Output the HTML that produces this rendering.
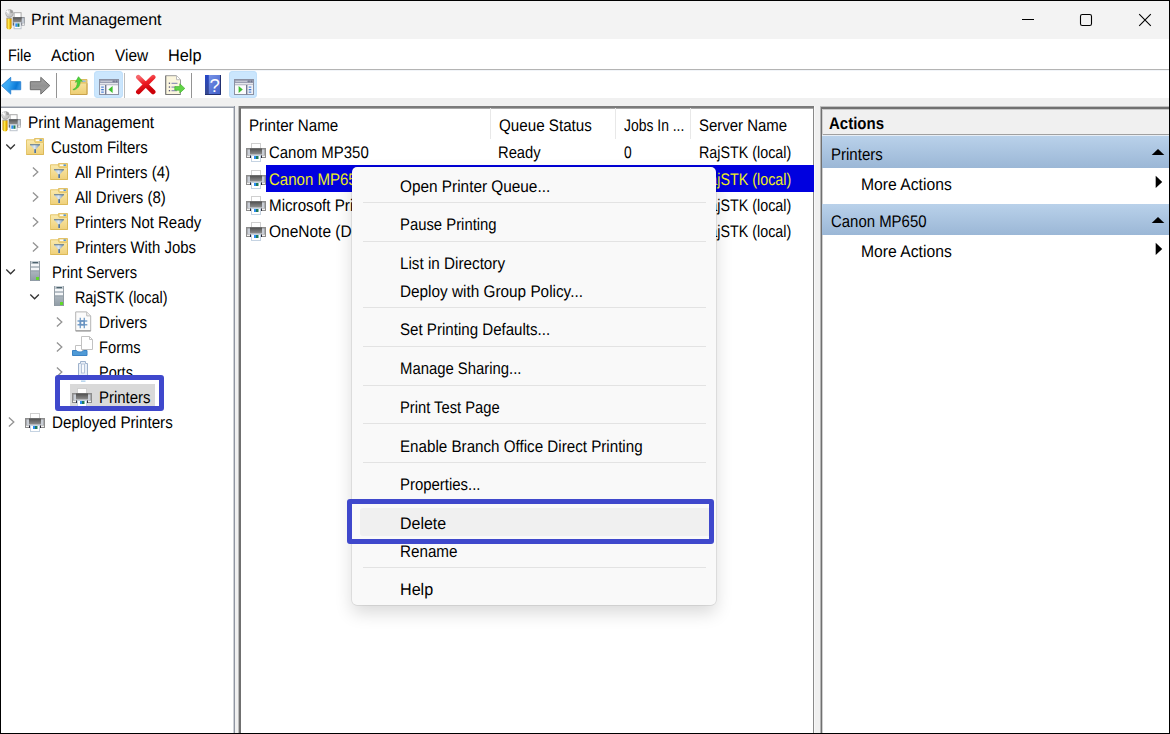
<!DOCTYPE html>
<html><head><meta charset="utf-8"><title>Print Management</title>
<style>
html,body{margin:0;padding:0;}
body{width:1170px;height:734px;overflow:hidden;background:#f0f0f0;font-family:"Liberation Sans",sans-serif;font-size:15px;color:#000;position:relative;}
.abs{position:absolute;}
.t{position:absolute;white-space:nowrap;line-height:20px;height:20px;font-size:16.8px;transform-origin:0 50%;text-rendering:geometricPrecision;}
.y{color:#eded22;}
#frame{position:absolute;left:0;top:0;width:1168px;height:732px;border:1px solid #000;z-index:50;}
#title{position:absolute;left:0;top:0;width:1170px;height:39px;background:#f3f3f3;}
#menu{position:absolute;left:0;top:39px;width:1170px;height:30px;background:#fff;border-bottom:1px solid #b4b4b4;}
#tool{position:absolute;left:0;top:70px;width:1170px;height:28.300px;background:#fff;border-top:1px solid #f1f4f8;box-sizing:border-box;}
#left{position:absolute;left:0;top:106px;width:233px;height:628px;background:#fff;}
#mid{position:absolute;left:238px;top:106px;width:575px;height:628px;background:#fff;}
#right{position:absolute;left:820px;top:106px;width:350px;height:628px;background:#fff;}
.band{position:absolute;left:822px;width:348px;height:31px;background:linear-gradient(#b9d1ea,#9bb7d6);}
.sep{position:absolute;left:363px;width:343px;height:1px;background:#e3e3e3;}
.hsep{position:absolute;top:108px;width:1px;height:31px;background:#e8e8e8;}
#ctx{position:absolute;left:352.200px;top:166.900px;width:364.200px;height:437.800px;background:#f9f9f9;border-radius:5px;box-shadow:0 0 0 0.700px rgba(0,0,0,0.100),0 8px 17px rgba(0,0,0,0.150);}
.bluebox{position:absolute;border:5px solid #3f48cc;border-radius:3px;box-sizing:border-box;}
</style></head><body>
<div id="title"></div>
<svg class="abs" style="left:4.6px;top:8.7px" width="21" height="21" viewBox="0 0 21 21">
<defs><linearGradient id="pma" x1="0" y1="0" x2="0" y2="1"><stop offset="0" stop-color="#555"/><stop offset="1" stop-color="#8c8c8c"/></linearGradient>
<linearGradient id="pya" x1="0" y1="0" x2="1" y2="0"><stop offset="0" stop-color="#c98d00"/><stop offset="0.420" stop-color="#ffec50"/><stop offset="0.700" stop-color="#eab400"/><stop offset="1" stop-color="#c88a00"/></linearGradient>
<linearGradient id="pwa" x1="0" y1="0" x2="1" y2="1"><stop offset="0" stop-color="#efefef"/><stop offset="1" stop-color="#b4b4b4"/></linearGradient></defs>
<rect x="9.100" y="3.700" width="7" height="5" fill="#fff" stroke="#a9a9a9"/>
<rect x="7.600" y="8" width="12.200" height="8.500" fill="#8f949b"/>
<rect x="8" y="8.300" width="9" height="4.700" fill="url(#pma)"/>
<rect x="16.700" y="9.200" width="2.200" height="5" fill="#c7ced8"/>
<rect x="8" y="13" width="9" height="1" fill="#dfe4ea"/>
<rect x="17" y="14.300" width="2.300" height="1.700" fill="#f0f0f0"/>
<rect x="8" y="13.500" width="1.100" height="3" fill="#2b2b3a"/><rect x="16" y="13.500" width="1.100" height="3" fill="#2b2b3a"/>
<rect x="9.100" y="13.700" width="7" height="6" fill="#fff" stroke="#bcc3cc"/>
<rect x="10.300" y="14.400" width="2.200" height="3.400" fill="#2a8cf0"/>
<rect x="12.500" y="14.400" width="2" height="3.400" fill="#1f7a5a"/>
<circle cx="4.500" cy="4.400" r="3.800" fill="url(#pwa)" stroke="#a2a2a2" stroke-width="0.700"/>
<path d="M5 0.600a3.800 3.800 0 0 1 3.200 3l-2.700 1z" fill="#9b9b9b"/>
<path d="M0.900 2.600l3.300 2.300-1.300-4z" fill="#fff"/>
<path d="M1.500 9.200h5.100v9.100a2.550 2.200 0 0 1-5.100 0z" fill="url(#pya)"/>
<rect x="1.500" y="8.600" width="5.100" height="0.900" fill="#8a8a8a"/>
</svg>
<span class="t" style="left:31.03px;top:10px;transform:scaleX(0.9740);font-size:16.4px;">Print Management</span>
<svg class="abs" style="left:1016px;top:8px" width="24" height="24" viewBox="0 0 24 24"><path d="M6 11.500H18" stroke="#000" stroke-width="1" fill="none"/></svg>
<svg class="abs" style="left:1074px;top:8px" width="24" height="24" viewBox="0 0 24 24"><rect x="6.500" y="6.500" width="11" height="11" rx="1.800" stroke="#000" stroke-width="1.100" fill="none"/></svg>
<svg class="abs" style="left:1133px;top:8px" width="24" height="24" viewBox="0 0 24 24"><path d="M6.200 6.200L17.800 17.800M17.800 6.200L6.200 17.800" stroke="#000" stroke-width="1.100" fill="none"/></svg>
<div id="menu"></div>
<span class="t" style="left:7.94px;top:46px;transform:scaleX(0.8636);">File</span>
<span class="t" style="left:51.40px;top:46px;transform:scaleX(0.9372);">Action</span>
<span class="t" style="left:115.30px;top:46px;transform:scaleX(0.9174);">View</span>
<span class="t" style="left:168.23px;top:46px;transform:scaleX(0.9705);">Help</span>
<div id="tool"></div>
<svg class="abs" style="left:1px;top:76px" width="21" height="19" viewBox="0 0 21 19">
<defs><linearGradient id="ba" x1="0" y1="0" x2="1" y2="0.300"><stop offset="0" stop-color="#4db5f8"/><stop offset="0.450" stop-color="#36a6f3"/><stop offset="0.850" stop-color="#0a78d6"/><stop offset="1" stop-color="#2b90e4"/></linearGradient></defs>
<path d="M9.700 1.300v4.400h10v8h-10v4.400l-9-8.500z" fill="url(#ba)" stroke="#2f86d4" stroke-width="1" stroke-linejoin="round"/></svg>
<svg class="abs" style="left:29px;top:76px" width="22" height="19" viewBox="0 0 22 19">
<defs><linearGradient id="fa" x1="0" y1="0" x2="0" y2="1"><stop offset="0" stop-color="#a9a9a9"/><stop offset="0.500" stop-color="#929292"/><stop offset="1" stop-color="#a3a3a3"/></linearGradient></defs>
<path d="M11.800 1.300v4.400h-10.500v8h10.500v4.400l9-8.500z" fill="url(#fa)" stroke="#6d6d6d" stroke-width="1" stroke-linejoin="round"/></svg>
<div class="abs" style="left:56px;top:73px;width:1px;height:25px;background:#949494"></div>
<svg class="abs" style="left:69px;top:75px" width="19" height="21" viewBox="0 0 19 21">
<defs><linearGradient id="fu" x1="0" y1="0" x2="0" y2="1"><stop offset="0" stop-color="#f8e6a6"/><stop offset="1" stop-color="#edcd72"/></linearGradient></defs>
<path d="M10 4.500h8v4h-8z" fill="#ecd07a" stroke="#dcbc62"/>
<rect x="13" y="5.500" width="3.500" height="1.400" fill="#8fb8ea"/>
<path d="M1.500 5.500h8l1 2.500h7.500v11.500h-16.500z" fill="url(#fu)" stroke="#dcbb60"/>
<path d="M1.500 19.500h16.500v-11" fill="none" stroke="#c9a24c"/>
<path d="M4 14.500c3-1 4.500-3.500 4.300-8l-2 0.800 3.200-5.600 3.800 4.600-2.200-0.200c0.300 5-2.600 7.900-6.600 8.900z" fill="#4fd13a" stroke="#35b525" stroke-width="0.600"/>
</svg>
<div class="abs" style="left:93.500px;top:71px;width:29px;height:27.400px;background:#cbe6fd;border-radius:4px;box-shadow:inset 0 0 0 1px #c2e0fa"></div>
<svg class="abs" style="left:99px;top:79px" width="20" height="16" viewBox="0 0 20 16"><rect x="0.500" y="0.500" width="19" height="15" fill="#fbfbfc" stroke="#8b90a2"/>
<rect x="1" y="1" width="18" height="3.200" fill="#9a9eb2"/>
<rect x="1.500" y="1.800" width="11.500" height="1.200" fill="#c3c6d2"/>
<rect x="14.200" y="1.500" width="1.400" height="1.800" fill="#6f748a"/><rect x="16.800" y="1.500" width="1.400" height="1.800" fill="#6f748a"/>
<rect x="1" y="4.200" width="18" height="1.200" fill="#e4e6ec"/>
<rect x="1" y="5.400" width="18" height="0.800" fill="#9da1b3"/><rect x="1" y="6.200" width="5" height="8.800" fill="#eef0f5"/>
<rect x="6" y="6" width="1.400" height="9.500" fill="#73798f"/>
<rect x="2.200" y="7.500" width="2.600" height="1.300" fill="#5f90dc"/><rect x="2.200" y="10" width="2.600" height="1.300" fill="#3f78d2"/><rect x="2.200" y="12.500" width="2.600" height="1.300" fill="#5f90dc"/>
<path d="M13.600 7v7l-4.200-3.500z" fill="#3fbf2f"/></svg>
<div class="abs" style="left:123.600px;top:73px;width:1.400px;height:25px;background:#bdbdbd"></div>
<svg class="abs" style="left:135px;top:74px" width="22" height="21" viewBox="0 0 22 21">
<defs><linearGradient id="rx" x1="0" y1="0" x2="0.300" y2="1"><stop offset="0" stop-color="#f5686d"/><stop offset="0.450" stop-color="#ee1c24"/><stop offset="1" stop-color="#cc0008"/></linearGradient></defs>
<path d="M3.300 3.200L18.200 18M18.200 3.200L3.300 18" stroke="url(#rx)" stroke-width="4.600" stroke-linecap="round" fill="none"/></svg>
<svg class="abs" style="left:165px;top:75px" width="21" height="20" viewBox="0 0 21 20">
<path d="M0.700 0.700h10.800l4 4v14.800h-14.800z" fill="#fbf6de" stroke="#9a9a9a"/>
<path d="M0.700 0.700v18.800h14.800" fill="none" stroke="#787878"/>
<path d="M11.500 0.700v4h4" fill="#fff" stroke="#bdbdbd"/>
<g fill="#55557a"><rect x="3.800" y="7.600" width="1.300" height="1.300"/><rect x="3.800" y="11.400" width="1.300" height="1.300"/><rect x="3.800" y="15" width="1.300" height="1.300"/></g>
<g fill="#7d7db0"><rect x="6.500" y="7.800" width="6" height="1"/><rect x="6.500" y="11.600" width="4" height="1"/><rect x="6.500" y="15.200" width="5.500" height="1"/></g>
<path d="M9.800 11.600h5v-2.800l5 4.600-5 4.600v-2.800h-5z" fill="#62d447" stroke="#43b52e" stroke-width="0.700" stroke-linejoin="round"/>
</svg>
<div class="abs" style="left:191px;top:73px;width:1px;height:25px;background:#949494"></div>
<svg class="abs" style="left:205px;top:75px" width="16" height="20" viewBox="0 0 16 20">
<defs><linearGradient id="hp" x1="0" y1="0" x2="1" y2="1"><stop offset="0" stop-color="#7e9aec"/><stop offset="1" stop-color="#3f5cc6"/></linearGradient>
<linearGradient id="hq" x1="0" y1="0" x2="0" y2="1"><stop offset="0" stop-color="#2647c8"/><stop offset="1" stop-color="#38488c"/></linearGradient></defs>
<rect x="0" y="0" width="16" height="20" fill="url(#hp)"/><rect x="0" y="0" width="3.800" height="20" fill="url(#hq)"/>
<path d="M0 19.500h15.500v-19.500" fill="none" stroke="#223070" stroke-width="1"/>
<text x="9.700" y="16.600" font-family="Liberation Sans, sans-serif" font-size="18.500" fill="#fff" text-anchor="middle">?</text>
</svg>
<div class="abs" style="left:228.800px;top:71px;width:28.700px;height:27.400px;background:#cbe6fd;border-radius:4px;box-shadow:inset 0 0 0 1px #c2e0fa"></div>
<svg class="abs" style="left:234px;top:79px" width="20" height="16" viewBox="0 0 20 16"><rect x="0.500" y="0.500" width="19" height="15" fill="#fbfbfc" stroke="#8b90a2"/>
<rect x="1" y="1" width="18" height="3.200" fill="#9a9eb2"/>
<rect x="1.500" y="1.800" width="11.500" height="1.200" fill="#c3c6d2"/>
<rect x="14.200" y="1.500" width="1.400" height="1.800" fill="#6f748a"/><rect x="16.800" y="1.500" width="1.400" height="1.800" fill="#6f748a"/>
<rect x="1" y="4.200" width="18" height="1.200" fill="#e4e6ec"/>
<rect x="1" y="5.400" width="18" height="0.800" fill="#9da1b3"/><rect x="13.500" y="6.200" width="5.500" height="8.800" fill="#eef0f5"/>
<rect x="12" y="6" width="1.400" height="9.500" fill="#73798f"/>
<rect x="14.700" y="7.500" width="2.600" height="1.300" fill="#5f90dc"/><rect x="14.700" y="10" width="2.600" height="1.300" fill="#3f78d2"/><rect x="14.700" y="12.500" width="2.600" height="1.300" fill="#5f90dc"/>
<path d="M4.600 7v7l4.200-3.500z" fill="#3fbf2f"/></svg>
<div id="left"></div>
<div class="abs" style="left:0px;top:106px;width:235px;height:1px;background:#c3c7cd"></div>
<div class="abs" style="left:0px;top:107px;width:235px;height:1px;background:#9399a4"></div>
<div class="abs" style="left:233px;top:108px;width:1px;height:626px;background:#cfd2d7"></div>
<div class="abs" style="left:234px;top:106px;width:1px;height:628px;background:#8f95a1"></div>
<svg class="abs" style="left:1px;top:111px" width="21" height="21" viewBox="0 0 21 21">
<defs><linearGradient id="pmb" x1="0" y1="0" x2="0" y2="1"><stop offset="0" stop-color="#555"/><stop offset="1" stop-color="#8c8c8c"/></linearGradient>
<linearGradient id="pyb" x1="0" y1="0" x2="1" y2="0"><stop offset="0" stop-color="#c98d00"/><stop offset="0.420" stop-color="#ffec50"/><stop offset="0.700" stop-color="#eab400"/><stop offset="1" stop-color="#c88a00"/></linearGradient>
<linearGradient id="pwb" x1="0" y1="0" x2="1" y2="1"><stop offset="0" stop-color="#efefef"/><stop offset="1" stop-color="#b4b4b4"/></linearGradient></defs>
<rect x="9.100" y="3.700" width="7" height="5" fill="#fff" stroke="#a9a9a9"/>
<rect x="7.600" y="8" width="12.200" height="8.500" fill="#8f949b"/>
<rect x="8" y="8.300" width="9" height="4.700" fill="url(#pmb)"/>
<rect x="16.700" y="9.200" width="2.200" height="5" fill="#c7ced8"/>
<rect x="8" y="13" width="9" height="1" fill="#dfe4ea"/>
<rect x="17" y="14.300" width="2.300" height="1.700" fill="#f0f0f0"/>
<rect x="8" y="13.500" width="1.100" height="3" fill="#2b2b3a"/><rect x="16" y="13.500" width="1.100" height="3" fill="#2b2b3a"/>
<rect x="9.100" y="13.700" width="7" height="6" fill="#fff" stroke="#bcc3cc"/>
<rect x="10.300" y="14.400" width="2.200" height="3.400" fill="#2a8cf0"/>
<rect x="12.500" y="14.400" width="2" height="3.400" fill="#1f7a5a"/>
<circle cx="4.500" cy="4.400" r="3.800" fill="url(#pwb)" stroke="#a2a2a2" stroke-width="0.700"/>
<path d="M5 0.600a3.800 3.800 0 0 1 3.200 3l-2.700 1z" fill="#9b9b9b"/>
<path d="M0.900 2.600l3.300 2.300-1.300-4z" fill="#fff"/>
<path d="M1.500 9.200h5.100v9.100a2.550 2.200 0 0 1-5.100 0z" fill="url(#pyb)"/>
<rect x="1.500" y="8.600" width="5.100" height="0.900" fill="#8a8a8a"/>
</svg>
<span class="t" style="left:27.68px;top:113px;transform:scaleX(0.9190);">Print Management</span>
<svg class="abs" style="left:5px;top:143.2px" width="12" height="8" viewBox="0 0 12 8"><path d="M1.300 1.500l4.300 4.300 4.300-4.300" stroke="#333" stroke-width="1.300" fill="none"/></svg>
<svg class="abs" style="left:26px;top:137.5px" width="18" height="17" viewBox="0 0 18 17">
<defs><linearGradient id="ffc1" x1="0" y1="0" x2="0" y2="1"><stop offset="0" stop-color="#f9e9ad"/><stop offset="1" stop-color="#efd07a"/></linearGradient>
<linearGradient id="fnc1" x1="0" y1="0" x2="1" y2="0"><stop offset="0" stop-color="#a9c0d6"/><stop offset="0.450" stop-color="#dbe6f0"/><stop offset="1" stop-color="#6f8dab"/></linearGradient></defs>
<path d="M8.500 0.500h9v5h-9z" fill="#edd281" stroke="#e3c266" stroke-width="1"/>
<path d="M0.500 1.800h7.600l1 2.600h8.400v12.100h-17z" fill="url(#ffc1)" stroke="#e5c76c" stroke-width="1"/>
<path d="M0.500 16.500h17v-11" fill="none" stroke="#dcb958" stroke-width="1"/>
<rect x="9.800" y="1.500" width="3.800" height="1.400" fill="#fff"/>
<rect x="13.600" y="1.500" width="2.200" height="1.400" fill="#3a8ee6"/>
<path d="M4 6.700h10l-4 4.600v4.200l-1.800-0.800v-3.400z" fill="url(#fnc1)"/>
<rect x="4" y="6.300" width="10" height="0.900" fill="#4f6d8c"/>
<rect x="8.300" y="11.200" width="1.700" height="3.800" fill="#54759a"/>
</svg>
<span class="t" style="left:51.10px;top:138px;transform:scaleX(0.8954);">Custom Filters</span>
<svg class="abs" style="left:32px;top:166px" width="8" height="12" viewBox="0 0 8 12"><path d="M0.900 1.600l4.900 4.400-4.900 4.400" stroke="#939393" stroke-width="1.300" fill="none"/></svg>
<svg class="abs" style="left:50px;top:163px" width="18" height="17" viewBox="0 0 18 17">
<defs><linearGradient id="ffd0" x1="0" y1="0" x2="0" y2="1"><stop offset="0" stop-color="#f9e9ad"/><stop offset="1" stop-color="#efd07a"/></linearGradient>
<linearGradient id="fnd0" x1="0" y1="0" x2="1" y2="0"><stop offset="0" stop-color="#a9c0d6"/><stop offset="0.450" stop-color="#dbe6f0"/><stop offset="1" stop-color="#6f8dab"/></linearGradient></defs>
<path d="M8.500 0.500h9v5h-9z" fill="#edd281" stroke="#e3c266" stroke-width="1"/>
<path d="M0.500 1.800h7.600l1 2.600h8.400v12.100h-17z" fill="url(#ffd0)" stroke="#e5c76c" stroke-width="1"/>
<path d="M0.500 16.500h17v-11" fill="none" stroke="#dcb958" stroke-width="1"/>
<rect x="9.800" y="1.500" width="3.800" height="1.400" fill="#fff"/>
<rect x="13.600" y="1.500" width="2.200" height="1.400" fill="#3a8ee6"/>
<path d="M4 6.700h10l-4 4.600v4.200l-1.800-0.800v-3.400z" fill="url(#fnd0)"/>
<rect x="4" y="6.300" width="10" height="0.900" fill="#4f6d8c"/>
<rect x="8.300" y="11.200" width="1.700" height="3.800" fill="#54759a"/>
</svg>
<span class="t" style="left:75.10px;top:163px;transform:scaleX(0.8939);">All Printers (4)</span>
<svg class="abs" style="left:32px;top:191px" width="8" height="12" viewBox="0 0 8 12"><path d="M0.900 1.600l4.900 4.400-4.900 4.400" stroke="#939393" stroke-width="1.300" fill="none"/></svg>
<svg class="abs" style="left:50px;top:188px" width="18" height="17" viewBox="0 0 18 17">
<defs><linearGradient id="ffd1" x1="0" y1="0" x2="0" y2="1"><stop offset="0" stop-color="#f9e9ad"/><stop offset="1" stop-color="#efd07a"/></linearGradient>
<linearGradient id="fnd1" x1="0" y1="0" x2="1" y2="0"><stop offset="0" stop-color="#a9c0d6"/><stop offset="0.450" stop-color="#dbe6f0"/><stop offset="1" stop-color="#6f8dab"/></linearGradient></defs>
<path d="M8.500 0.500h9v5h-9z" fill="#edd281" stroke="#e3c266" stroke-width="1"/>
<path d="M0.500 1.800h7.600l1 2.600h8.400v12.100h-17z" fill="url(#ffd1)" stroke="#e5c76c" stroke-width="1"/>
<path d="M0.500 16.500h17v-11" fill="none" stroke="#dcb958" stroke-width="1"/>
<rect x="9.800" y="1.500" width="3.800" height="1.400" fill="#fff"/>
<rect x="13.600" y="1.500" width="2.200" height="1.400" fill="#3a8ee6"/>
<path d="M4 6.700h10l-4 4.600v4.200l-1.800-0.800v-3.400z" fill="url(#fnd1)"/>
<rect x="4" y="6.300" width="10" height="0.900" fill="#4f6d8c"/>
<rect x="8.300" y="11.200" width="1.700" height="3.800" fill="#54759a"/>
</svg>
<span class="t" style="left:75.10px;top:188px;transform:scaleX(0.8938);">All Drivers (8)</span>
<svg class="abs" style="left:32px;top:216px" width="8" height="12" viewBox="0 0 8 12"><path d="M0.900 1.600l4.900 4.400-4.900 4.400" stroke="#939393" stroke-width="1.300" fill="none"/></svg>
<svg class="abs" style="left:50px;top:213px" width="18" height="17" viewBox="0 0 18 17">
<defs><linearGradient id="ffd2" x1="0" y1="0" x2="0" y2="1"><stop offset="0" stop-color="#f9e9ad"/><stop offset="1" stop-color="#efd07a"/></linearGradient>
<linearGradient id="fnd2" x1="0" y1="0" x2="1" y2="0"><stop offset="0" stop-color="#a9c0d6"/><stop offset="0.450" stop-color="#dbe6f0"/><stop offset="1" stop-color="#6f8dab"/></linearGradient></defs>
<path d="M8.500 0.500h9v5h-9z" fill="#edd281" stroke="#e3c266" stroke-width="1"/>
<path d="M0.500 1.800h7.600l1 2.600h8.400v12.100h-17z" fill="url(#ffd2)" stroke="#e5c76c" stroke-width="1"/>
<path d="M0.500 16.500h17v-11" fill="none" stroke="#dcb958" stroke-width="1"/>
<rect x="9.800" y="1.500" width="3.800" height="1.400" fill="#fff"/>
<rect x="13.600" y="1.500" width="2.200" height="1.400" fill="#3a8ee6"/>
<path d="M4 6.700h10l-4 4.600v4.200l-1.800-0.800v-3.400z" fill="url(#fnd2)"/>
<rect x="4" y="6.300" width="10" height="0.900" fill="#4f6d8c"/>
<rect x="8.300" y="11.200" width="1.700" height="3.800" fill="#54759a"/>
</svg>
<span class="t" style="left:74.71px;top:213px;transform:scaleX(0.8906);">Printers Not Ready</span>
<svg class="abs" style="left:32px;top:241px" width="8" height="12" viewBox="0 0 8 12"><path d="M0.900 1.600l4.900 4.400-4.900 4.400" stroke="#939393" stroke-width="1.300" fill="none"/></svg>
<svg class="abs" style="left:50px;top:238px" width="18" height="17" viewBox="0 0 18 17">
<defs><linearGradient id="ffd3" x1="0" y1="0" x2="0" y2="1"><stop offset="0" stop-color="#f9e9ad"/><stop offset="1" stop-color="#efd07a"/></linearGradient>
<linearGradient id="fnd3" x1="0" y1="0" x2="1" y2="0"><stop offset="0" stop-color="#a9c0d6"/><stop offset="0.450" stop-color="#dbe6f0"/><stop offset="1" stop-color="#6f8dab"/></linearGradient></defs>
<path d="M8.500 0.500h9v5h-9z" fill="#edd281" stroke="#e3c266" stroke-width="1"/>
<path d="M0.500 1.800h7.600l1 2.600h8.400v12.100h-17z" fill="url(#ffd3)" stroke="#e5c76c" stroke-width="1"/>
<path d="M0.500 16.500h17v-11" fill="none" stroke="#dcb958" stroke-width="1"/>
<rect x="9.800" y="1.500" width="3.800" height="1.400" fill="#fff"/>
<rect x="13.600" y="1.500" width="2.200" height="1.400" fill="#3a8ee6"/>
<path d="M4 6.700h10l-4 4.600v4.200l-1.800-0.800v-3.400z" fill="url(#fnd3)"/>
<rect x="4" y="6.300" width="10" height="0.900" fill="#4f6d8c"/>
<rect x="8.300" y="11.200" width="1.700" height="3.800" fill="#54759a"/>
</svg>
<span class="t" style="left:74.71px;top:238px;transform:scaleX(0.8882);">Printers With Jobs</span>
<svg class="abs" style="left:5px;top:268.2px" width="12" height="8" viewBox="0 0 12 8"><path d="M1.300 1.500l4.300 4.300 4.300-4.300" stroke="#333" stroke-width="1.300" fill="none"/></svg>
<svg class="abs" style="left:30px;top:261px" width="10" height="20" viewBox="0 0 10 20">
<defs><linearGradient id="svs1" x1="0" y1="0" x2="0" y2="1"><stop offset="0" stop-color="#c9d0d6"/><stop offset="1" stop-color="#8f9ba5"/></linearGradient></defs>
<rect x="0" y="0" width="10" height="20" fill="url(#svs1)"/>
<rect x="0" y="0" width="0.8" height="20" fill="#8d969e"/><rect x="9.2" y="0" width="0.8" height="20" fill="#8d969e"/>
<rect x="2.5" y="1.2" width="5.5" height="1" fill="#2d4a55"/>
<rect x="1" y="3" width="8" height="2" fill="#f4f6f8"/>
<rect x="1" y="7" width="8" height="2" fill="#f4f6f8"/>
<rect x="1" y="10" width="8" height="0.7" fill="#9aa5ae"/>
<rect x="6" y="16" width="3" height="3" fill="#5fd829"/>
</svg>
<span class="t" style="left:51.52px;top:263px;transform:scaleX(0.8766);">Print Servers</span>
<svg class="abs" style="left:29px;top:293.2px" width="12" height="8" viewBox="0 0 12 8"><path d="M1.300 1.500l4.300 4.300 4.300-4.300" stroke="#333" stroke-width="1.300" fill="none"/></svg>
<svg class="abs" style="left:54px;top:286px" width="10" height="20" viewBox="0 0 10 20">
<defs><linearGradient id="svs2" x1="0" y1="0" x2="0" y2="1"><stop offset="0" stop-color="#c9d0d6"/><stop offset="1" stop-color="#8f9ba5"/></linearGradient></defs>
<rect x="0" y="0" width="10" height="20" fill="url(#svs2)"/>
<rect x="0" y="0" width="0.8" height="20" fill="#8d969e"/><rect x="9.2" y="0" width="0.8" height="20" fill="#8d969e"/>
<rect x="2.5" y="1.2" width="5.5" height="1" fill="#2d4a55"/>
<rect x="1" y="3" width="8" height="2" fill="#f4f6f8"/>
<rect x="1" y="7" width="8" height="2" fill="#f4f6f8"/>
<rect x="1" y="10" width="8" height="0.7" fill="#9aa5ae"/>
<rect x="6" y="16" width="3" height="3" fill="#5fd829"/>
</svg>
<span class="t" style="left:74.75px;top:288px;transform:scaleX(0.8548);">RajSTK (local)</span>
<svg class="abs" style="left:56px;top:316px" width="8" height="12" viewBox="0 0 8 12"><path d="M0.900 1.600l4.900 4.400-4.900 4.400" stroke="#939393" stroke-width="1.300" fill="none"/></svg>
<svg class="abs" style="left:75px;top:311px" width="17" height="21" viewBox="0 0 17 21">
<path d="M0.700 0.900h11l4 4v15h-15z" fill="#fbfbfb" stroke="#b4b4b4"/>
<path d="M0.700 19.900h15" fill="none" stroke="#8e8e8e"/>
<path d="M11.700 0.900v4h4" fill="#f0f0f0" stroke="#bdbdbd"/>
<g stroke="#7aa2cb" stroke-width="1.400" fill="none"><path d="M5.300 6.800v10.400M9.300 6.800v10.400M2.500 10h9.800M2.500 13.800h9.800"/></g>
<rect x="4.600" y="9.300" width="5.400" height="5.200" fill="#6892c0"/>
<rect x="6.300" y="10.900" width="2" height="2" fill="#fff"/>
</svg>
<span class="t" style="left:99.00px;top:313px;transform:scaleX(0.9025);">Drivers</span>
<svg class="abs" style="left:56px;top:341px" width="8" height="12" viewBox="0 0 8 12"><path d="M0.900 1.600l4.900 4.400-4.900 4.400" stroke="#939393" stroke-width="1.300" fill="none"/></svg>
<svg class="abs" style="left:72px;top:336px" width="21" height="21" viewBox="0 0 21 21">
<path d="M3.5 15v-5.5h7v5.5" fill="#fff" stroke="#c2c2c2"/>
<path d="M0.5 14.5h4c1 2 6 2 7 0h3.5v5h-14.500z" fill="#4f9ad6" stroke="#3b82c4"/>
<path d="M9.500 0.500h8l3 3v10h-11z" fill="#fff" stroke="#c2c2c2"/>
<path d="M17.500 0.500v3h3" fill="none" stroke="#c2c2c2"/>
</svg>
<span class="t" style="left:99.02px;top:338px;transform:scaleX(0.8776);">Forms</span>
<svg class="abs" style="left:56px;top:366px" width="8" height="12" viewBox="0 0 8 12"><path d="M0.900 1.600l4.900 4.400-4.900 4.400" stroke="#939393" stroke-width="1.300" fill="none"/></svg>
<svg class="abs" style="left:78px;top:361px" width="10" height="22" viewBox="0 0 10 22">
<path d="M2.500 0.500h5v2h2v14h-9v-14h2z" fill="#e9eff7" stroke="#9fb2cc"/>
<rect x="3.500" y="3" width="3" height="9" fill="#f8fafd" stroke="#a9b9d2" stroke-width="0.8"/>
<rect x="1" y="14" width="8" height="2" fill="#a9d4ef"/>
<rect x="3" y="19.500" width="4.500" height="1.300" fill="#a9cdea"/>
</svg>
<span class="t" style="left:99.03px;top:363px;transform:scaleX(0.8656);">Ports</span>
<div class="abs" style="left:70px;top:384px;width:84.800px;height:23px;background:#d9d9d9"></div>
<svg class="abs" style="left:72px;top:388px" width="20" height="19" viewBox="0 0 20 19">
<defs><linearGradient id="pbp0" x1="0" y1="0" x2="0" y2="1"><stop offset="0" stop-color="#4f4f4f"/><stop offset="1" stop-color="#8a8a8a"/></linearGradient></defs>
<rect x="5.5" y="0.5" width="9" height="5" fill="#fff" stroke="#d0d0d0"/>
<rect x="0" y="5" width="20" height="10" fill="#8c8c8c"/>
<rect x="4" y="5.5" width="12" height="5.5" fill="url(#pbp0)"/>
<rect x="1.5" y="6.5" width="2.5" height="5.5" fill="#c9ced6"/>
<rect x="16" y="6.5" width="2.5" height="5.5" fill="#c9ced6"/>
<rect x="3.5" y="11.5" width="13" height="1" fill="#dfe4ea"/>
<rect x="1" y="12.5" width="3" height="1.5" fill="#f2f2f2"/>
<rect x="16" y="12.5" width="3" height="1.5" fill="#f2f2f2"/>
<rect x="4" y="12.5" width="1.2" height="2.5" fill="#2b2b3a"/>
<rect x="14.8" y="12.5" width="1.2" height="2.5" fill="#2b2b3a"/>
<rect x="5.5" y="12.5" width="9" height="6" fill="#fff" stroke="#c5d3e2"/>
<rect x="8" y="13" width="2" height="3" fill="#2a8cf0"/>
<rect x="10" y="13" width="2.5" height="3" fill="#1f7a5a"/>
</svg>
<span class="t" style="left:99.01px;top:388px;transform:scaleX(0.8914);">Printers</span>
<div class="bluebox" style="left:54.500px;top:375.400px;width:109.200px;height:36px"></div>
<svg class="abs" style="left:8px;top:416px" width="8" height="12" viewBox="0 0 8 12"><path d="M0.900 1.600l4.900 4.400-4.900 4.400" stroke="#939393" stroke-width="1.300" fill="none"/></svg>
<svg class="abs" style="left:25px;top:413px" width="20" height="19" viewBox="0 0 20 19">
<defs><linearGradient id="pbp1" x1="0" y1="0" x2="0" y2="1"><stop offset="0" stop-color="#4f4f4f"/><stop offset="1" stop-color="#8a8a8a"/></linearGradient></defs>
<rect x="5.5" y="0.5" width="9" height="5" fill="#fff" stroke="#d0d0d0"/>
<rect x="0" y="5" width="20" height="10" fill="#8c8c8c"/>
<rect x="4" y="5.5" width="12" height="5.5" fill="url(#pbp1)"/>
<rect x="1.5" y="6.5" width="2.5" height="5.5" fill="#c9ced6"/>
<rect x="16" y="6.5" width="2.5" height="5.5" fill="#c9ced6"/>
<rect x="3.5" y="11.5" width="13" height="1" fill="#dfe4ea"/>
<rect x="1" y="12.5" width="3" height="1.5" fill="#f2f2f2"/>
<rect x="16" y="12.5" width="3" height="1.5" fill="#f2f2f2"/>
<rect x="4" y="12.5" width="1.2" height="2.5" fill="#2b2b3a"/>
<rect x="14.8" y="12.5" width="1.2" height="2.5" fill="#2b2b3a"/>
<rect x="5.5" y="12.5" width="9" height="6" fill="#fff" stroke="#c5d3e2"/>
<rect x="8" y="13" width="2" height="3" fill="#2a8cf0"/>
<rect x="10" y="13" width="2.5" height="3" fill="#1f7a5a"/>
</svg>
<span class="t" style="left:51.59px;top:413px;transform:scaleX(0.9054);">Deployed Printers</span>
<div id="mid"></div>
<div class="abs" style="left:238px;top:106px;width:1px;height:628px;background:#bdbdbd"></div>
<div class="abs" style="left:239px;top:106px;width:2px;height:628px;background:#707070"></div>
<div class="abs" style="left:239px;top:106px;width:575px;height:2px;background:#7a7a7a"></div>
<div class="abs" style="left:241px;top:108px;width:572px;height:1px;background:#a8a8a8"></div>
<div class="abs" style="left:813px;top:108px;width:1px;height:626px;background:#8a8a8a"></div>
<div class="abs" style="left:814px;top:106px;width:1px;height:628px;background:#f8f8f8"></div>
<div class="hsep" style="left:490px"></div>
<div class="hsep" style="left:615px"></div>
<div class="hsep" style="left:690px"></div>
<span class="t" style="left:248.80px;top:116px;transform:scaleX(0.9034);">Printer Name</span>
<span class="t" style="left:498.80px;top:116px;transform:scaleX(0.9048);">Queue Status</span>
<span class="t" style="left:623.60px;top:116px;transform:scaleX(0.8295);">Jobs In ...</span>
<span class="t" style="left:699.00px;top:116px;transform:scaleX(0.8912);">Server Name</span>
<div class="abs" style="left:266px;top:165px;width:548px;height:26.600px;background:#0000df"></div>
<svg class="abs" style="left:246px;top:143px" width="20" height="19" viewBox="0 0 20 19">
<defs><linearGradient id="pbl0" x1="0" y1="0" x2="0" y2="1"><stop offset="0" stop-color="#4f4f4f"/><stop offset="1" stop-color="#8a8a8a"/></linearGradient></defs>
<rect x="5.5" y="0.5" width="9" height="5" fill="#fff" stroke="#d0d0d0"/>
<rect x="0" y="5" width="20" height="10" fill="#8c8c8c"/>
<rect x="4" y="5.5" width="12" height="5.5" fill="url(#pbl0)"/>
<rect x="1.5" y="6.5" width="2.5" height="5.5" fill="#c9ced6"/>
<rect x="16" y="6.5" width="2.5" height="5.5" fill="#c9ced6"/>
<rect x="3.5" y="11.5" width="13" height="1" fill="#dfe4ea"/>
<rect x="1" y="12.5" width="3" height="1.5" fill="#f2f2f2"/>
<rect x="16" y="12.5" width="3" height="1.5" fill="#f2f2f2"/>
<rect x="4" y="12.5" width="1.2" height="2.5" fill="#2b2b3a"/>
<rect x="14.8" y="12.5" width="1.2" height="2.5" fill="#2b2b3a"/>
<rect x="5.5" y="12.5" width="9" height="6" fill="#fff" stroke="#c5d3e2"/>
<rect x="8" y="13" width="2" height="3" fill="#2a8cf0"/>
<rect x="10" y="13" width="2.5" height="3" fill="#1f7a5a"/>
</svg>
<span class="t" style="left:269.40px;top:143px;transform:scaleX(0.8907);">Canom MP350</span>
<span class="t" style="left:498.12px;top:143px;transform:scaleX(0.8791);">Ready</span>
<span class="t" style="left:624.20px;top:143px;transform:scaleX(0.8222);">0</span>
<span class="t" style="left:698.65px;top:143px;transform:scaleX(0.8529);">RajSTK (local)</span>
<svg class="abs" style="left:246px;top:170px" width="20" height="19" viewBox="0 0 20 19">
<defs><linearGradient id="pbl1" x1="0" y1="0" x2="0" y2="1"><stop offset="0" stop-color="#4f4f4f"/><stop offset="1" stop-color="#8a8a8a"/></linearGradient></defs>
<rect x="5.5" y="0.5" width="9" height="5" fill="#fff" stroke="#d0d0d0"/>
<rect x="0" y="5" width="20" height="10" fill="#8c8c8c"/>
<rect x="4" y="5.5" width="12" height="5.5" fill="url(#pbl1)"/>
<rect x="1.5" y="6.5" width="2.5" height="5.5" fill="#c9ced6"/>
<rect x="16" y="6.5" width="2.5" height="5.5" fill="#c9ced6"/>
<rect x="3.5" y="11.5" width="13" height="1" fill="#dfe4ea"/>
<rect x="1" y="12.5" width="3" height="1.5" fill="#f2f2f2"/>
<rect x="16" y="12.5" width="3" height="1.5" fill="#f2f2f2"/>
<rect x="4" y="12.5" width="1.2" height="2.5" fill="#2b2b3a"/>
<rect x="14.8" y="12.5" width="1.2" height="2.5" fill="#2b2b3a"/>
<rect x="5.5" y="12.5" width="9" height="6" fill="#fff" stroke="#c5d3e2"/>
<rect x="8" y="13" width="2" height="3" fill="#2a8cf0"/>
<rect x="10" y="13" width="2.5" height="3" fill="#1f7a5a"/>
</svg>
<span class="t y" style="left:269.40px;top:170px;transform:scaleX(0.8957);">Canon MP650</span>
<span class="t y" style="left:498.12px;top:170px;transform:scaleX(0.8791);">Ready</span>
<span class="t y" style="left:624.20px;top:170px;transform:scaleX(0.8222);">0</span>
<span class="t y" style="left:698.65px;top:170px;transform:scaleX(0.8529);">RajSTK (local)</span>
<svg class="abs" style="left:246px;top:196px" width="20" height="19" viewBox="0 0 20 19">
<defs><linearGradient id="pbl2" x1="0" y1="0" x2="0" y2="1"><stop offset="0" stop-color="#4f4f4f"/><stop offset="1" stop-color="#8a8a8a"/></linearGradient></defs>
<rect x="5.5" y="0.5" width="9" height="5" fill="#fff" stroke="#d0d0d0"/>
<rect x="0" y="5" width="20" height="10" fill="#8c8c8c"/>
<rect x="4" y="5.5" width="12" height="5.5" fill="url(#pbl2)"/>
<rect x="1.5" y="6.5" width="2.5" height="5.5" fill="#c9ced6"/>
<rect x="16" y="6.5" width="2.5" height="5.5" fill="#c9ced6"/>
<rect x="3.5" y="11.5" width="13" height="1" fill="#dfe4ea"/>
<rect x="1" y="12.5" width="3" height="1.5" fill="#f2f2f2"/>
<rect x="16" y="12.5" width="3" height="1.5" fill="#f2f2f2"/>
<rect x="4" y="12.5" width="1.2" height="2.5" fill="#2b2b3a"/>
<rect x="14.8" y="12.5" width="1.2" height="2.5" fill="#2b2b3a"/>
<rect x="5.5" y="12.5" width="9" height="6" fill="#fff" stroke="#c5d3e2"/>
<rect x="8" y="13" width="2" height="3" fill="#2a8cf0"/>
<rect x="10" y="13" width="2.5" height="3" fill="#1f7a5a"/>
</svg>
<span class="t" style="left:269.20px;top:196px;transform:scaleX(0.9038);">Microsoft Print to PDF</span>
<span class="t" style="left:498.12px;top:196px;transform:scaleX(0.8791);">Ready</span>
<span class="t" style="left:624.20px;top:196px;transform:scaleX(0.8222);">0</span>
<span class="t" style="left:698.65px;top:196px;transform:scaleX(0.8529);">RajSTK (local)</span>
<svg class="abs" style="left:246px;top:222px" width="20" height="19" viewBox="0 0 20 19">
<defs><linearGradient id="pbl3" x1="0" y1="0" x2="0" y2="1"><stop offset="0" stop-color="#4f4f4f"/><stop offset="1" stop-color="#8a8a8a"/></linearGradient></defs>
<rect x="5.5" y="0.5" width="9" height="5" fill="#fff" stroke="#d0d0d0"/>
<rect x="0" y="5" width="20" height="10" fill="#8c8c8c"/>
<rect x="4" y="5.5" width="12" height="5.5" fill="url(#pbl3)"/>
<rect x="1.5" y="6.5" width="2.5" height="5.5" fill="#c9ced6"/>
<rect x="16" y="6.5" width="2.5" height="5.5" fill="#c9ced6"/>
<rect x="3.5" y="11.5" width="13" height="1" fill="#dfe4ea"/>
<rect x="1" y="12.5" width="3" height="1.5" fill="#f2f2f2"/>
<rect x="16" y="12.5" width="3" height="1.5" fill="#f2f2f2"/>
<rect x="4" y="12.5" width="1.2" height="2.5" fill="#2b2b3a"/>
<rect x="14.8" y="12.5" width="1.2" height="2.5" fill="#2b2b3a"/>
<rect x="5.5" y="12.5" width="9" height="6" fill="#fff" stroke="#c5d3e2"/>
<rect x="8" y="13" width="2" height="3" fill="#2a8cf0"/>
<rect x="10" y="13" width="2.5" height="3" fill="#1f7a5a"/>
</svg>
<span class="t" style="left:269.40px;top:222px;transform:scaleX(0.9238);">OneNote (Desktop)</span>
<span class="t" style="left:498.12px;top:222px;transform:scaleX(0.8791);">Ready</span>
<span class="t" style="left:624.20px;top:222px;transform:scaleX(0.8222);">0</span>
<span class="t" style="left:698.65px;top:222px;transform:scaleX(0.8529);">RajSTK (local)</span>
<div id="right"></div>
<div class="abs" style="left:820px;top:106px;width:1px;height:628px;background:#b5b5b5"></div>
<div class="abs" style="left:821px;top:106px;width:1px;height:628px;background:#707070"></div>
<div class="abs" style="left:822px;top:106px;width:1px;height:628px;background:#d0d0d0"></div>
<div class="abs" style="left:820px;top:106px;width:350px;height:1px;background:#c0c0c0"></div>
<div class="abs" style="left:821px;top:107px;width:349px;height:2px;background:#707070"></div>
<div class="abs" style="left:823px;top:109px;width:347px;height:1px;background:#c8c8c8"></div>
<div class="abs" style="left:823px;top:110px;width:347px;height:24px;background:#f0f0f0;border-bottom:1px solid #a0a0a0"></div>
<div class="abs" style="left:822px;top:135px;width:348px;height:1px;background:#e8eef5"></div>
<span class="t" style="left:829.30px;top:114px;transform:scaleX(0.8937);font-weight:bold;">Actions</span>
<div class="band" style="top:136px;height:31.500px"></div>
<span class="t" style="left:831.11px;top:145px;transform:scaleX(0.8950);">Printers</span>
<span class="t" style="left:860.96px;top:175px;transform:scaleX(0.9354);">More Actions</span>
<div class="band" style="top:204.200px;height:30.500px"></div>
<span class="t" style="left:831.30px;top:212px;transform:scaleX(0.8901);">Canon MP650</span>
<span class="t" style="left:860.96px;top:242px;transform:scaleX(0.9354);">More Actions</span>
<svg class="abs" style="left:1151px;top:148.3px" width="14" height="8" viewBox="0 0 14 8"><path d="M0.700 7l6.300-6 6.300 6z" fill="#000"/></svg>
<svg class="abs" style="left:1151px;top:215.8px" width="14" height="8" viewBox="0 0 14 8"><path d="M0.700 7l6.300-6 6.300 6z" fill="#000"/></svg>
<svg class="abs" style="left:1155px;top:175px" width="8" height="14" viewBox="0 0 8 14"><path d="M0.700 0.800l6.500 6.100-6.500 6.100z" fill="#000"/></svg>
<svg class="abs" style="left:1155px;top:242.3px" width="8" height="14" viewBox="0 0 8 14"><path d="M0.700 0.800l6.500 6.100-6.500 6.100z" fill="#000"/></svg>
<div id="ctx"></div>
<div class="sep" style="top:202px"></div>
<div class="sep" style="top:241px"></div>
<div class="sep" style="top:307px"></div>
<div class="sep" style="top:346px"></div>
<div class="sep" style="top:385px"></div>
<div class="sep" style="top:423px"></div>
<div class="sep" style="top:462px"></div>
<div class="sep" style="top:567px"></div>
<span class="t" style="left:400.00px;top:177px;transform:scaleX(0.9149);">Open Printer Queue...</span>
<span class="t" style="left:399.72px;top:215px;transform:scaleX(0.8849);">Pause Printing</span>
<span class="t" style="left:399.69px;top:254px;transform:scaleX(0.9085);">List in Directory</span>
<span class="t" style="left:399.69px;top:282px;transform:scaleX(0.9136);">Deploy with Group Policy...</span>
<span class="t" style="left:400.00px;top:320px;transform:scaleX(0.8996);">Set Printing Defaults...</span>
<span class="t" style="left:399.71px;top:359px;transform:scaleX(0.8858);">Manage Sharing...</span>
<span class="t" style="left:399.72px;top:398px;transform:scaleX(0.8776);">Print Test Page</span>
<span class="t" style="left:399.70px;top:437px;transform:scaleX(0.9042);">Enable Branch Office Direct Printing</span>
<span class="t" style="left:399.71px;top:475px;transform:scaleX(0.8896);">Properties...</span>
<div class="abs" style="left:359.600px;top:508.400px;width:352px;height:27.300px;background:#f0f0f0;border-radius:3px"></div>
<span class="t" style="left:399.75px;top:514px;transform:scaleX(0.9518);">Delete</span>
<span class="t" style="left:399.79px;top:542px;transform:scaleX(0.9067);">Rename</span>
<span class="t" style="left:399.74px;top:580px;transform:scaleX(0.9614);">Help</span>
<div class="bluebox" style="left:347.300px;top:498.500px;width:366.400px;height:45px"></div>
<div id="frame"></div>
</body></html>
